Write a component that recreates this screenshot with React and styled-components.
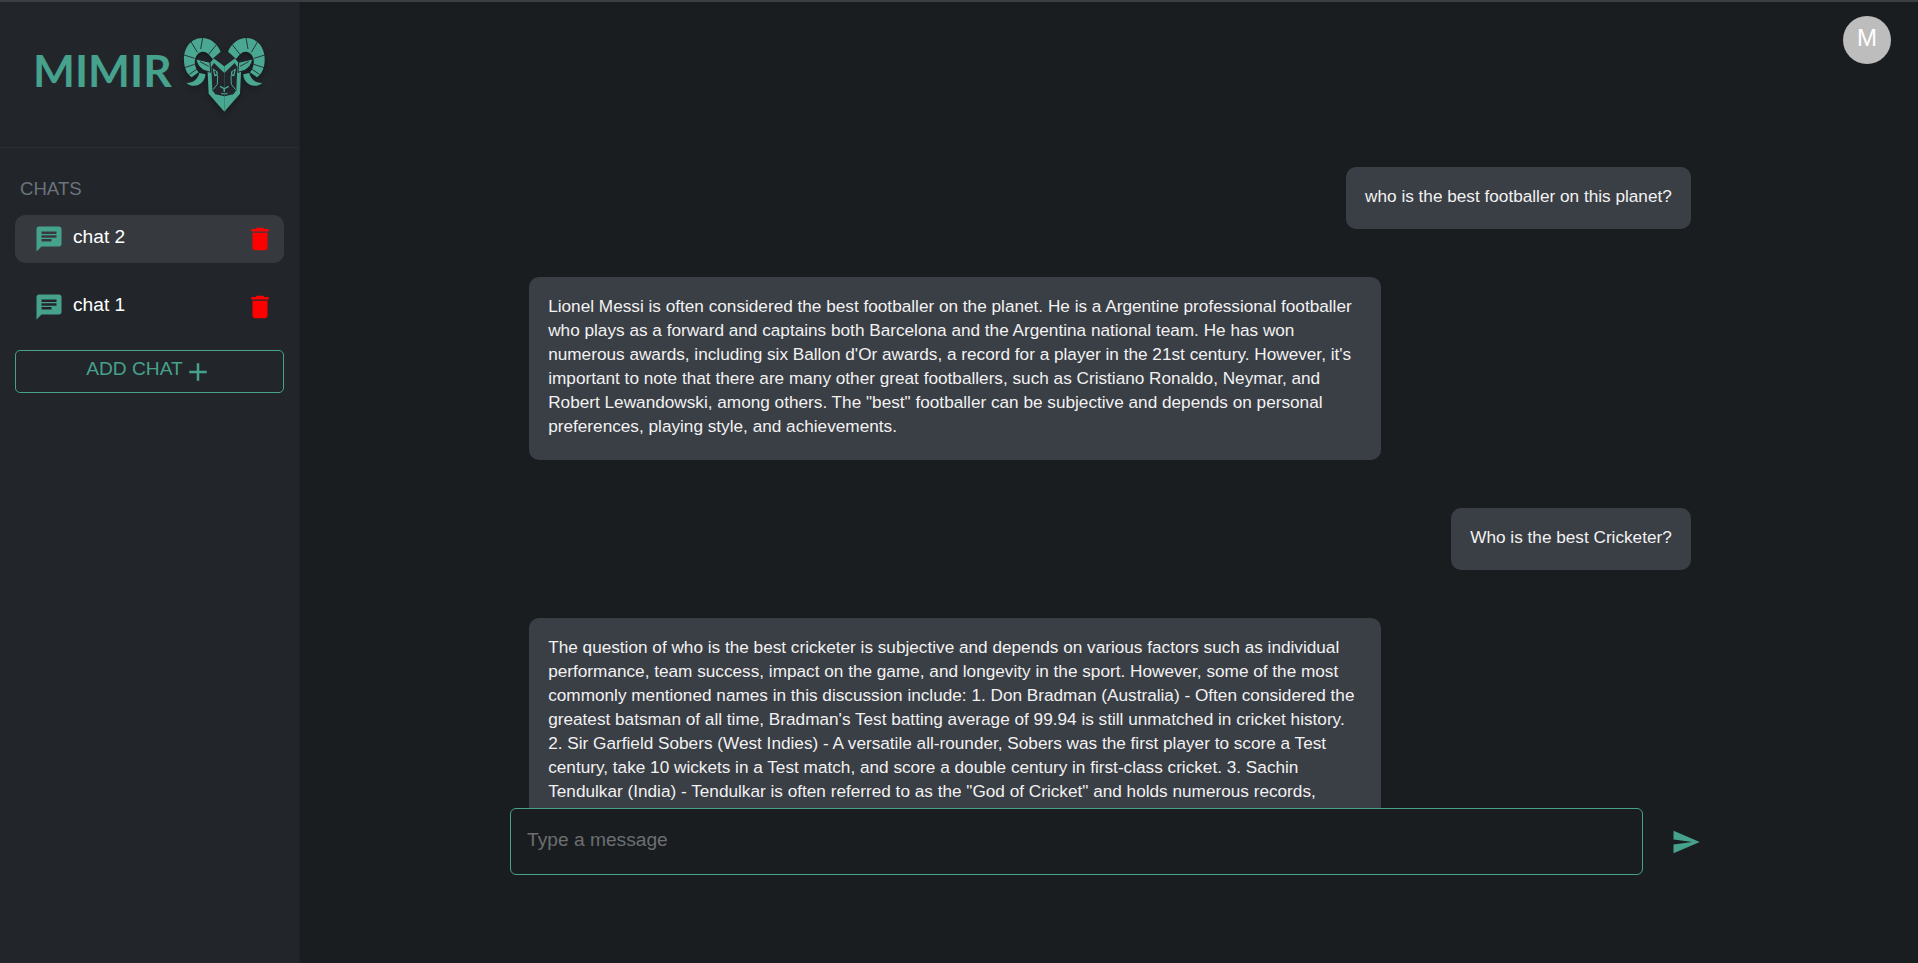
import styled, { createGlobalStyle } from 'styled-components';

const teal = '#46a28c';

const GlobalStyle = createGlobalStyle`
  * { box-sizing: border-box; }
  html, body { margin: 0; height: 100%; background: #1a1d20; }
  body { font-family: "Liberation Sans", Arial, sans-serif; color: #fff; overflow: hidden; }
  #root { height: 100%; }
`;

const Page = styled.div`
  display: flex;
  height: 100vh;
  border-top: 2px solid #3c3f42;
`;

const Sidebar = styled.aside`
  width: 300px;
  flex-shrink: 0;
  background: #22262b;
  border-right: 1px solid #1e2125;
`;

const LogoBar = styled.div`
  height: 146px;
  display: flex;
  align-items: flex-start;
  padding: 35px 0 0 33px;
  border-bottom: 1px solid #2b2f34;
`;

const LogoText = styled.span`
  font-family: Lato, sans-serif;
  font-weight: 700;
  font-size: 44.4px;
  line-height: 46px;
  margin-top: 10px;
  color: ${teal};
  width: 150px;
`;

const ChatsSection = styled.div`
  padding: 30px 15px 0;
`;

const SectionTitle = styled.h2`
  margin: 0 0 15px 5px;
  font-size: 18.6px;
  line-height: 22px;
  font-weight: 400;
  color: #6b737c;
`;

const ChatItem = styled.div`
  display: flex;
  align-items: center;
  height: 48px;
  padding: 0 9px 0 19px;
  margin-bottom: 19.5px;
  border-radius: 10px;
  background: ${(p) => (p.$active ? '#363a3f' : 'transparent')};
`;

const ChatName = styled.span`
  flex: 1;
  margin: -4px 0 0 9px;
  font-size: 19.2px;
  line-height: 24px;
  color: #fff;
`;

const AddButton = styled.button`
  width: 100%;
  height: 43px;
  display: flex;
  align-items: center;
  justify-content: center;
  padding: 0;
  background: transparent;
  border: 1px solid ${teal};
  border-radius: 5px;
  color: ${teal};
  font: 400 19.2px/24px "Liberation Sans", Arial, sans-serif;
`;

const AddLabel = styled.span`
  margin-top: -6px;
`;

const Main = styled.main`
  position: relative;
  flex: 1;
  min-width: 0;
  display: flex;
  flex-direction: column;
`;

const Avatar = styled.div`
  position: absolute;
  top: 14px;
  right: 27px;
  width: 48px;
  height: 48px;
  border-radius: 50%;
  background: #bdbdbd;
  display: flex;
  align-items: center;
  justify-content: center;
  padding-bottom: 4px;
  font-size: 24px;
  color: #fff;
`;

const Messages = styled.div`
  flex: 1;
  min-height: 0;
  overflow: hidden;
  width: 1164px;
  margin: 0 auto;
  padding: 165px 0 0 2px;
  display: flex;
  flex-direction: column;
  gap: 48px;
`;

const Bubble = styled.div`
  flex-shrink: 0;
  align-self: ${(p) => (p.$mine ? 'flex-end' : 'flex-start')};
  max-width: 852px;
  padding: 17px 19.2px 21.4px;
  border-radius: 10px;
  background: #3a3e45;
  font-size: 17.2px;
  line-height: 24px;
  color: #f2f2f2;
`;

const Composer = styled.div`
  height: 155px;
  flex-shrink: 0;
  width: 1198px;
  margin: 0 auto;
  display: flex;
  align-items: flex-start;
`;

const MessageInput = styled.input`
  width: 1133px;
  height: 67px;
  padding: 0 16px 4px;
  background: #1a1d20;
  border: 1px solid ${teal};
  border-radius: 6px;
  outline: none;
  color: #fff;
  font: 400 19.2px "Liberation Sans", Arial, sans-serif;

  &::placeholder {
    color: #6c6e70;
    opacity: 1;
  }
`;

const SendButton = styled.button`
  width: 30px;
  height: 67px;
  margin-left: 28px;
  padding: 0;
  display: flex;
  align-items: center;
  justify-content: center;
  background: none;
  border: none;
  color: ${teal};
`;

const MuiIcon = ({ d, color = teal, size = 30 }) => (
  <svg width={size} height={size} viewBox="0 0 24 24" fill={color} style={{ flexShrink: 0 }}>
    <path d={d} />
  </svg>
);

const chatPath = 'M20 2H4c-1.1 0-1.99.9-1.99 2L2 22l4-4h14c1.1 0 2-.9 2-2V4c0-1.1-.9-2-2-2zM6 9h12v2H6V9zm8 5H6v-2h8v2zm4-6H6V6h12v2z';
const deletePath = 'M6 19c0 1.1.9 2 2 2h8c1.1 0 2-.9 2-2V7H6v12zM19 4h-3.5l-1-1h-5l-1 1H5v2h14V4z';
const addPath = 'M19 13h-6v6h-2v-6H5v-2h6V5h2v6h6v2z';
const sendPath = 'M2.01 21 23 12 2.01 3 2 10l15 2-15 2z';

const bg = '#22262b';
const ramTeal = '#4aa892';

// one half of the ram, mirrored for the other side
const RamHalf = ({ flip }) => (
  <g transform={flip ? 'translate(326 0) scale(-1 1)' : undefined}>
    <path d="M152 78C142 52 118 36 96 37C60 38 40 70 42 105C43 130 52 145 65 155L86 140C76 128 72 112 76 98C82 78 102 72 116 86L128 100Z" fill={ramTeal} />
    <path d="M50 172C70 172 84 160 88 142L106 146C106 168 86 184 66 180C58 178 53 176 50 172Z" fill={ramTeal} />
    <g stroke={bg} strokeWidth="2.6" fill="none">
      <path d="M98 36L92 70" />
      <path d="M62 46L82 80" />
      <path d="M42 88L74 98" />
      <path d="M44 126L74 116" />
      <path d="M58 146L84 128" />
      <path d="M140 56L116 86" />
    </g>
    <path d="M163 258L116 204L112 120L132 98L163 122Z" fill={ramTeal} />
    <path d="M78 100L120 110L122 140L102 134C88 126 80 114 78 100Z" fill={ramTeal} stroke={bg} strokeWidth="3" />
    <path d="M90 108L116 122" stroke={bg} strokeWidth="2.6" />
    <path d="M163 142L132 112L124 124L127 194L136 206L163 212Z" fill={bg} />
    <path d="M128 128L143 138L143 150L133 152Z" fill={ramTeal} />
    <path d="M135 136L138 146" stroke={bg} strokeWidth="4" />
    <path d="M143 150L142 176L129 192" fill="none" stroke={ramTeal} strokeWidth="3" />
    <path d="M150 182L163 189L163 198" fill="none" stroke={ramTeal} strokeWidth="4" />
    <path d="M163 205L154 203" stroke={ramTeal} strokeWidth="3.5" />
  </g>
);

const RamLogo = () => (
  <svg width="84" height="76" viewBox="39 34 252 228" style={{ flexShrink: 0, filter: 'drop-shadow(0 3px 3px rgba(0,0,0,.35))' }}>
    <RamHalf />
    <RamHalf flip />
    <path d="M150 82L178 82L195 98L163 120L131 98Z" fill={bg} />
  </svg>
);

const chats = [
  { id: 2, name: 'chat 2', active: true },
  { id: 1, name: 'chat 1', active: false },
];

const messages = [
  { id: 1, mine: true, text: 'who is the best footballer on this planet?' },
  {
    id: 2,
    text: 'Lionel Messi is often considered the best footballer on the planet. He is a Argentine professional footballer who plays as a forward and captains both Barcelona and the Argentina national team. He has won numerous awards, including six Ballon d\'Or awards, a record for a player in the 21st century. However, it\'s important to note that there are many other great footballers, such as Cristiano Ronaldo, Neymar, and Robert Lewandowski, among others. The "best" footballer can be subjective and depends on personal preferences, playing style, and achievements.',
  },
  { id: 3, mine: true, text: 'Who is the best Cricketer?' },
  {
    id: 4,
    text: 'The question of who is the best cricketer is subjective and depends on various factors such as individual performance, team success, impact on the game, and longevity in the sport. However, some of the most commonly mentioned names in this discussion include: 1. Don Bradman (Australia) - Often considered the greatest batsman of all time, Bradman\'s Test batting average of 99.94 is still unmatched in cricket history. 2. Sir Garfield Sobers (West Indies) - A versatile all-rounder, Sobers was the first player to score a Test century, take 10 wickets in a Test match, and score a double century in first-class cricket. 3. Sachin Tendulkar (India) - Tendulkar is often referred to as the "God of Cricket" and holds numerous records,',
  },
];

export default function App() {
  return (
    <Page>
      <GlobalStyle />
      <Sidebar>
        <LogoBar>
          <LogoText>MIMIR</LogoText>
          <RamLogo />
        </LogoBar>
        <ChatsSection>
          <SectionTitle>CHATS</SectionTitle>
          {chats.map((chat) => (
            <ChatItem key={chat.id} $active={chat.active}>
              <MuiIcon d={chatPath} />
              <ChatName>{chat.name}</ChatName>
              <MuiIcon d={deletePath} color="#ff0000" />
            </ChatItem>
          ))}
          <AddButton>
            <AddLabel>ADD CHAT</AddLabel>
            <MuiIcon d={addPath} />
          </AddButton>
        </ChatsSection>
      </Sidebar>
      <Main>
        <Avatar>M</Avatar>
        <Messages>
          {messages.map((msg) => (
            <Bubble key={msg.id} $mine={msg.mine}>{msg.text}</Bubble>
          ))}
        </Messages>
        <Composer>
          <MessageInput placeholder="Type a message" />
          <SendButton aria-label="send">
            <MuiIcon d={sendPath} />
          </SendButton>
        </Composer>
      </Main>
    </Page>
  );
}
